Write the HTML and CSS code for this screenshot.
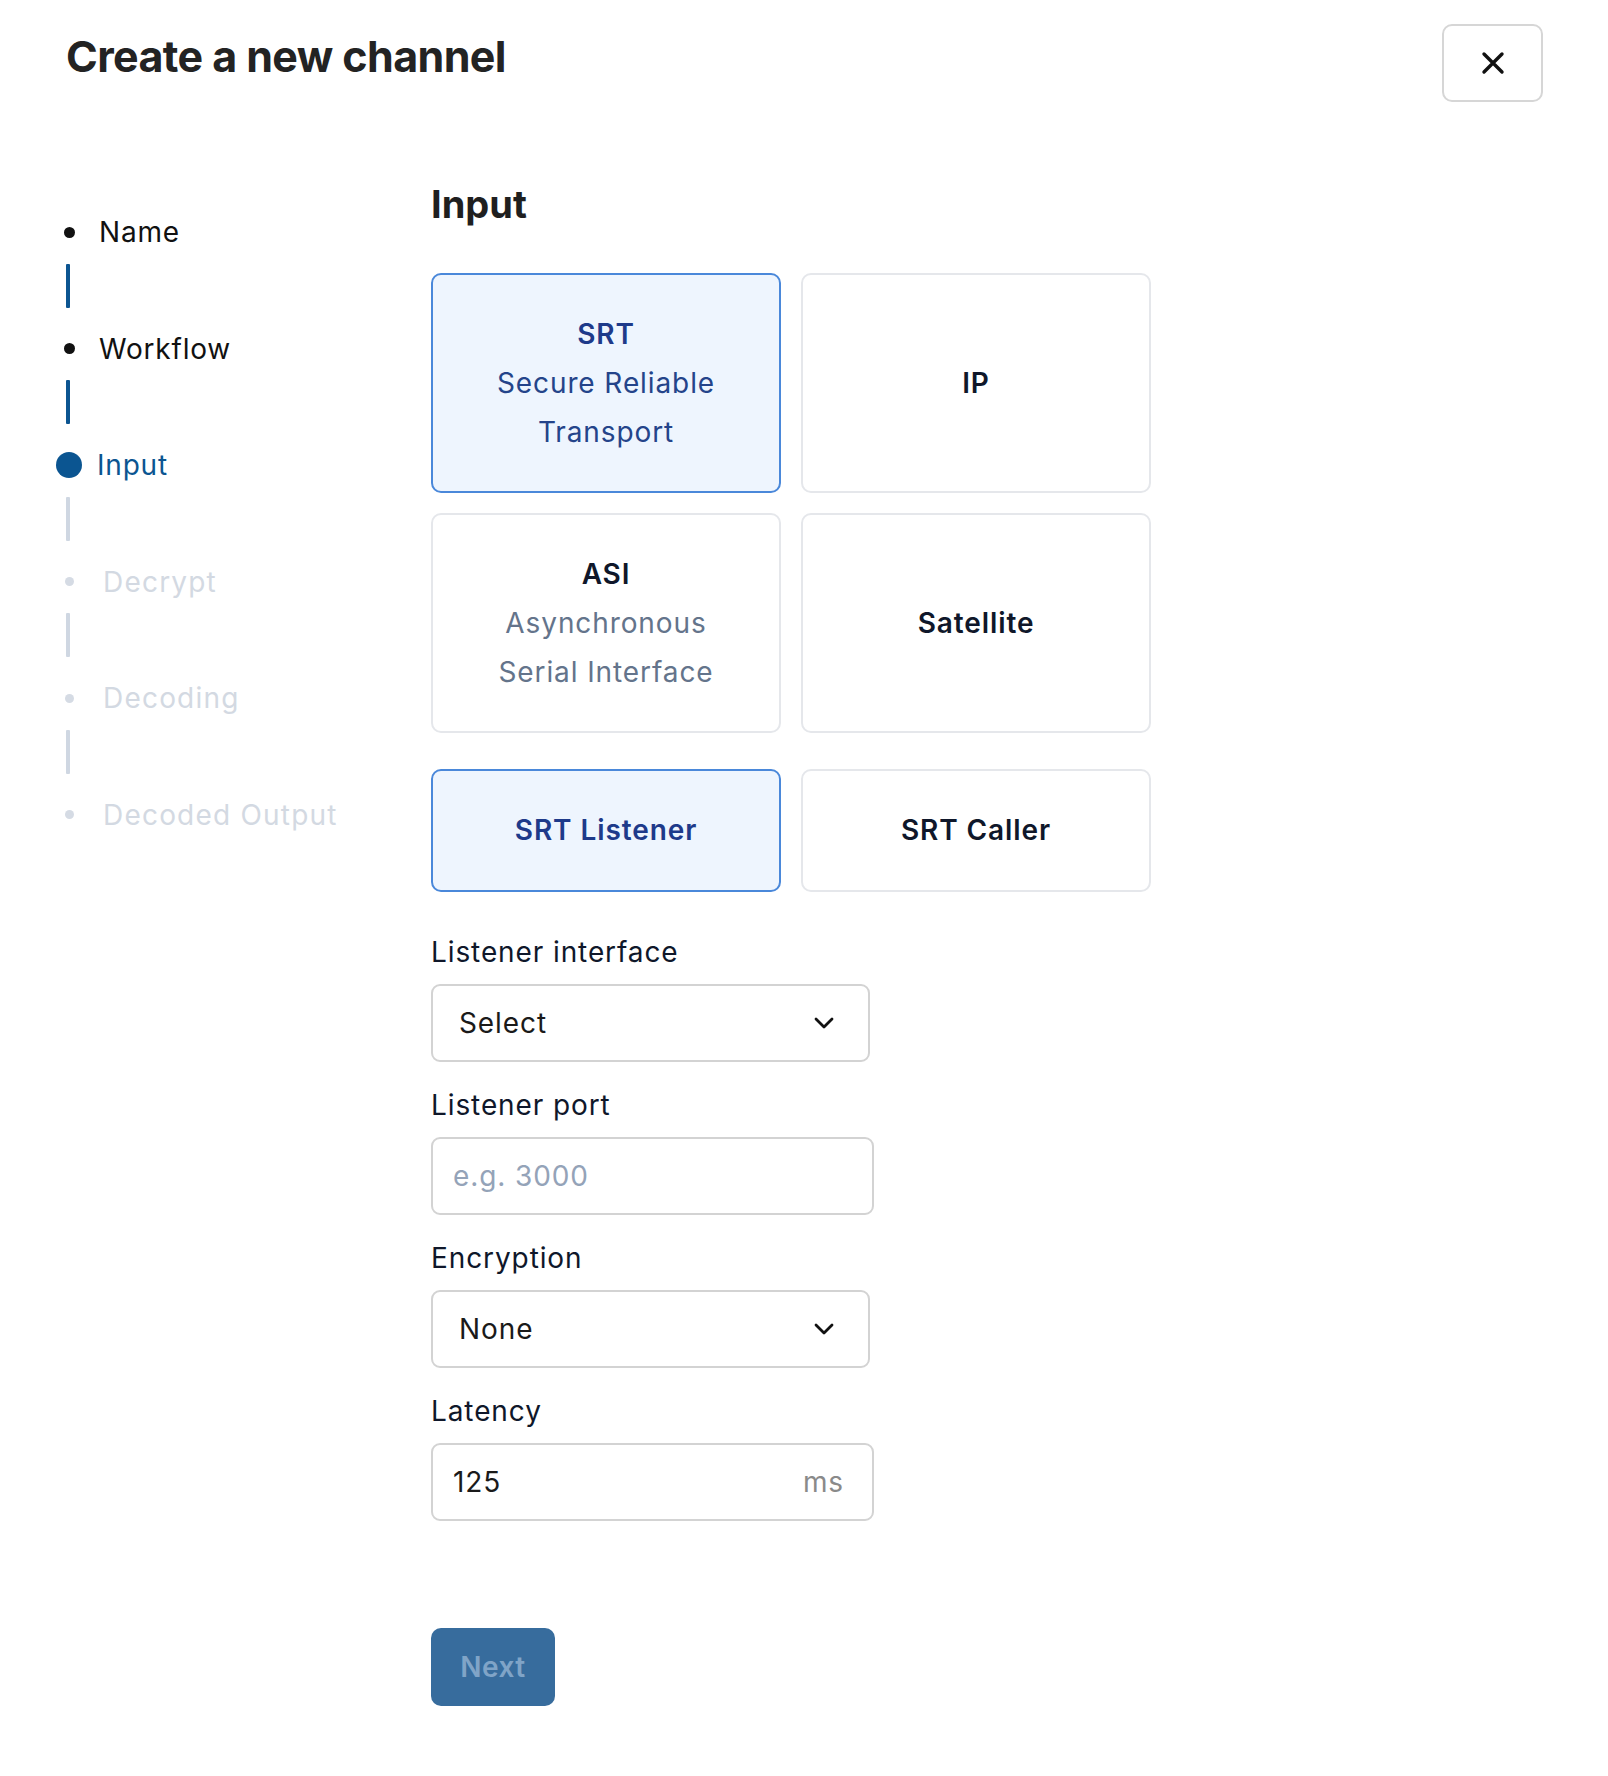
FILE: index.html
```html
<!DOCTYPE html>
<html lang="en">
<head>
    <meta charset="UTF-8">
    <meta name="viewport" content="width=device-width, initial-scale=1.0">
    <title>Create a new channel</title>
    <link rel="stylesheet" href="styles.css">
</head>
<body>
    <div class="page">
        <div class="header">
            <h1 class="title">Create a new channel</h1>
            <button class="close-button" aria-label="Close">
                <svg width="24" height="24" viewBox="0 0 24 24">
                    <path d="M3 3 L21 21 M21 3 L3 21" stroke="#111" stroke-width="3.4" stroke-linecap="round" fill="none"/>
                </svg>
            </button>
        </div>

        <div class="body">
            <ul class="steps">
                <li class="step done"><span class="marker"><span class="dot"></span></span><span class="label">Name</span></li>
                <li class="connector done"></li>
                <li class="step done"><span class="marker"><span class="dot"></span></span><span class="label">Workflow</span></li>
                <li class="connector done"></li>
                <li class="step current"><span class="marker"><span class="dot"></span></span><span class="label">Input</span></li>
                <li class="connector"></li>
                <li class="step"><span class="marker"><span class="dot"></span></span><span class="label">Decrypt</span></li>
                <li class="connector"></li>
                <li class="step"><span class="marker"><span class="dot"></span></span><span class="label">Decoding</span></li>
                <li class="connector"></li>
                <li class="step"><span class="marker"><span class="dot"></span></span><span class="label">Decoded Output</span></li>
            </ul>

            <div class="main">
                <h2 class="section-title">Input</h2>

                <div class="options">
                    <div class="option selected">
                        <div class="option-name">SRT</div>
                        <div class="option-desc">Secure Reliable<br>Transport</div>
                    </div>
                    <div class="option">
                        <div class="option-name">IP</div>
                    </div>
                    <div class="option">
                        <div class="option-name">ASI</div>
                        <div class="option-desc">Asynchronous<br>Serial Interface</div>
                    </div>
                    <div class="option">
                        <div class="option-name">Satellite</div>
                    </div>
                </div>

                <div class="options modes">
                    <div class="option selected"><div class="option-name">SRT Listener</div></div>
                    <div class="option"><div class="option-name">SRT Caller</div></div>
                </div>

                <div class="field">
                    <div class="field-label">Listener interface</div>
                    <div class="select">
                        <span>Select</span>
                        <svg class="chevron" width="20" height="12" viewBox="0 0 20 12">
                            <path d="M2 2 L10 10 L18 2" stroke="#111" stroke-width="2.8" stroke-linecap="round" stroke-linejoin="round" fill="none"/>
                        </svg>
                    </div>
                </div>

                <div class="field">
                    <div class="field-label">Listener port</div>
                    <div class="text-input">
                        <span class="placeholder">e.g. 3000</span>
                    </div>
                </div>

                <div class="field">
                    <div class="field-label">Encryption</div>
                    <div class="select">
                        <span>None</span>
                        <svg class="chevron" width="20" height="12" viewBox="0 0 20 12">
                            <path d="M2 2 L10 10 L18 2" stroke="#111" stroke-width="2.8" stroke-linecap="round" stroke-linejoin="round" fill="none"/>
                        </svg>
                    </div>
                </div>

                <div class="field">
                    <div class="field-label">Latency</div>
                    <div class="text-input">
                        <span class="value">125</span>
                        <span class="unit">ms</span>
                    </div>
                </div>

                <button class="next-button">Next</button>
            </div>
        </div>
    </div>
</body>
</html>
```

FILE: styles.css
```css
body {
    margin: 0;
    background: #ffffff;
    font-family: Inter, "Noto Sans", sans-serif;
    color: #111111;
}

.page {
    padding: 24px 65px 0 55px;
}

.header {
    display: flex;
    justify-content: space-between;
    align-items: flex-start;
}

.title {
    margin: 6px 0 0 11px;
    font-size: 43px;
    line-height: 53px;
    font-weight: 700;
    color: #232323;
    letter-spacing: -0.6px;
}

.close-button {
    width: 101px;
    height: 78px;
    background: #fff;
    border: 2px solid #d6d6d6;
    border-radius: 10px;
    display: flex;
    align-items: center;
    justify-content: center;
    padding: 0;
    cursor: pointer;
}

.body {
    display: flex;
    margin-top: 79px;
}

/* steps on the left */
.steps {
    list-style: none;
    margin: 31px 0 0 0;
    padding: 0;
    width: 376px;
}

.step {
    display: flex;
    align-items: center;
    height: 40px;
    font-size: 28px;
    letter-spacing: 0.8px;
    color: #d3d9e2;
}

.marker {
    width: 28px;
    display: flex;
    justify-content: center;
    align-items: center;
}

.dot {
    width: 9px;
    height: 9px;
    border-radius: 50%;
    background: #d5dbe4;
}

.step .label {
    margin-left: 20px;
    letter-spacing: 1.2px;
}

.step.done {
    color: #111111;
}

.step.done .dot {
    width: 11px;
    height: 11px;
    background: #111111;
}

.step.done .label {
    margin-left: 16px;
    letter-spacing: 0.8px;
}

.step.current {
    color: #0b5591;
}

.step.current .dot {
    width: 26px;
    height: 26px;
    background: #0b5591;
}

.step.current .label {
    margin-left: 14px;
    letter-spacing: 0.8px;
}

.connector {
    width: 4px;
    height: 44px;
    margin: 11.5px 0 21px 11px;
    background: #cfd7e2;
    border-radius: 1px;
}

.connector.done {
    background: #0c5591;
}

/* main column */
.main {
    width: 722px;
}

.section-title {
    margin: 0 0 46px 0;
    font-size: 38px;
    line-height: 46px;
    font-weight: 700;
    color: #1f1f1f;
}

.options {
    display: grid;
    grid-template-columns: 350px 350px;
    gap: 20px;
}

.option {
    height: 220px;
    box-sizing: border-box;
    border: 2px solid #e5e7eb;
    border-radius: 10px;
    background: #fff;
    display: flex;
    flex-direction: column;
    justify-content: center;
    align-items: center;
    text-align: center;
    font-size: 28px;
    line-height: 49px;
    color: #0f172a;
}

.option.selected {
    background: #eef5fe;
    border-color: #4a88da;
    color: #1e3a8a;
}

.option-name {
    font-weight: 600;
    letter-spacing: 0.9px;
}

.option-desc {
    color: #64748b;
    letter-spacing: 0.9px;
}

.option.selected .option-desc {
    color: #24448a;
}

.modes {
    margin-top: 36px;
}

.modes .option {
    height: 123px;
}

.field {
    margin-top: 40px;
}

.field + .field {
    margin-top: 23px;
}

.field-label {
    font-size: 28px;
    line-height: 40px;
    letter-spacing: 0.9px;
    color: #0f172a;
    margin-bottom: 12px;
}

.select,
.text-input {
    box-sizing: border-box;
    height: 78px;
    border: 2px solid #d3d3d3;
    border-radius: 9px;
    display: flex;
    align-items: center;
    justify-content: space-between;
    font-size: 28px;
    letter-spacing: 0.9px;
    color: #1a1a1a;
}

.select {
    width: 439px;
    padding: 0 34px 0 26px;
}

.text-input {
    width: 443px;
    padding: 0 28px 0 20px;
}

.placeholder {
    color: #94a3b8;
}

.unit {
    color: #8a8a8a;
}

.next-button {
    margin-top: 107px;
    width: 124px;
    height: 78px;
    border: none;
    border-radius: 10px;
    background: #376c9d;
    color: #80a4c7;
    font-family: Inter, "Noto Sans", sans-serif;
    font-size: 28px;
    font-weight: 600;
    letter-spacing: 0.5px;
}
```
